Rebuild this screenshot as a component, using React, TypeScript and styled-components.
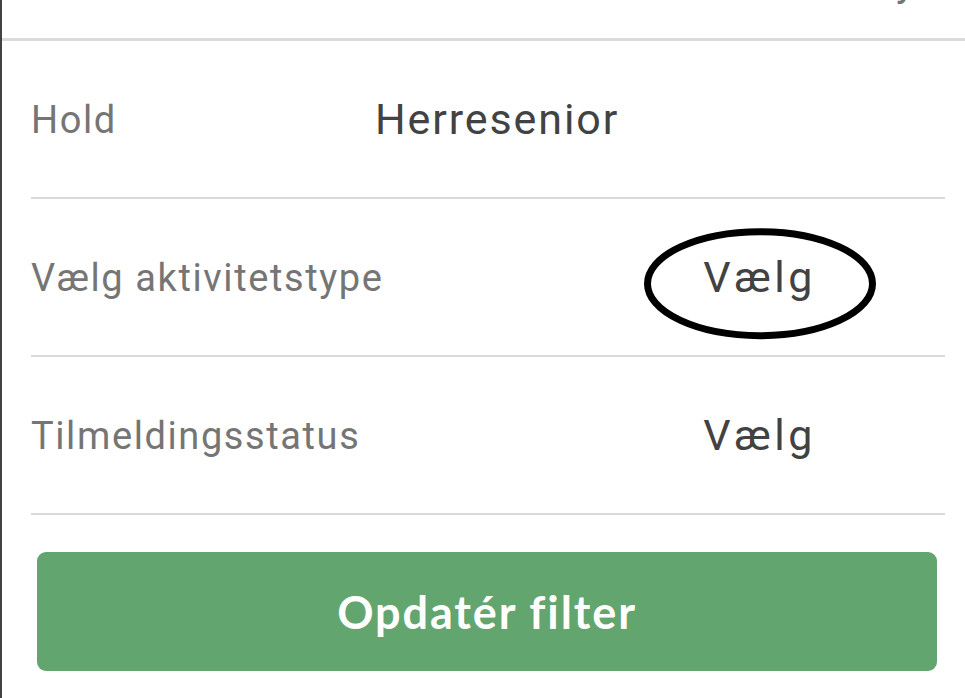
import React from "react";
import styled, { createGlobalStyle } from "styled-components";

const GlobalStyle = createGlobalStyle`
  html, body {
    margin: 0;
    padding: 0;
    background: #ffffff;
  }
  body {
    font-family: Roboto, "Noto Sans", sans-serif;
  }
`;

const Screen = styled.div`
  width: 965px;
  height: 698px;
  box-sizing: border-box;
  border-left: 2px solid #424242;
  overflow: hidden;
  display: flex;
  flex-direction: column;
`;

const TopStrip = styled.div`
  height: 38px;
  overflow: hidden;
  display: flex;
  justify-content: flex-end;
  padding-right: 50px;
  border-bottom: 3px solid #dadada;
`;

const CutText = styled.span`
  font-size: 40px;
  line-height: 40px;
  color: #757575;
  margin-top: -37px;
`;

const List = styled.div`
  display: flex;
  flex-direction: column;
  padding: 0 20px 0 29px;
`;

const Row = styled.div`
  height: 156px;
  display: grid;
  grid-template-columns: 344px 1fr;
  align-items: center;
  border-bottom: 2px solid #dadada;
`;

const Label = styled.div`
  font-size: 38px;
  letter-spacing: 1.6px;
  color: #757575;
  white-space: nowrap;
  padding-top: 2px;
`;

const Value = styled.div`
  font-size: 43px;
  letter-spacing: 1.9px;
  color: #424242;
  white-space: nowrap;
`;

const Picker = styled.div`
  position: relative;
  justify-self: end;
  margin-right: 129px;
  font-size: 43px;
  letter-spacing: 3.6px;
  color: #424242;
  white-space: nowrap;
`;

const Mark = styled.svg`
  position: absolute;
  left: 50%;
  top: 50%;
  transform: translate(-50%, -44%);
  overflow: visible;
  pointer-events: none;
`;

const Footer = styled.div`
  padding: 37px 28px 0 35px;
`;

const Button = styled.button`
  width: 100%;
  height: 119px;
  border: none;
  border-radius: 9px;
  background: #62a56e;
  color: #ffffff;
  font-family: Lato, "Open Sans", sans-serif;
  font-weight: 700;
  font-size: 45px;
  letter-spacing: 1.9px;
  cursor: pointer;
`;

const Circled = () => (
  <Mark width="232" height="111" viewBox="0 0 232 111">
    <ellipse
      cx="116"
      cy="55.5"
      rx="112.5"
      ry="52"
      fill="none"
      stroke="#000"
      strokeWidth="7"
    />
  </Mark>
);

export default function App() {
  return (
    <>
      <GlobalStyle />
      <Screen>
        <TopStrip>
          <CutText>y</CutText>
        </TopStrip>
        <List>
          <Row>
            <Label>Hold</Label>
            <Value>Herresenior</Value>
          </Row>
          <Row>
            <Label>Vælg aktivitetstype</Label>
            <Picker>
              Vælg
              <Circled />
            </Picker>
          </Row>
          <Row>
            <Label>Tilmeldingsstatus</Label>
            <Picker>Vælg</Picker>
          </Row>
        </List>
        <Footer>
          <Button>Opdatér filter</Button>
        </Footer>
      </Screen>
    </>
  );
}
